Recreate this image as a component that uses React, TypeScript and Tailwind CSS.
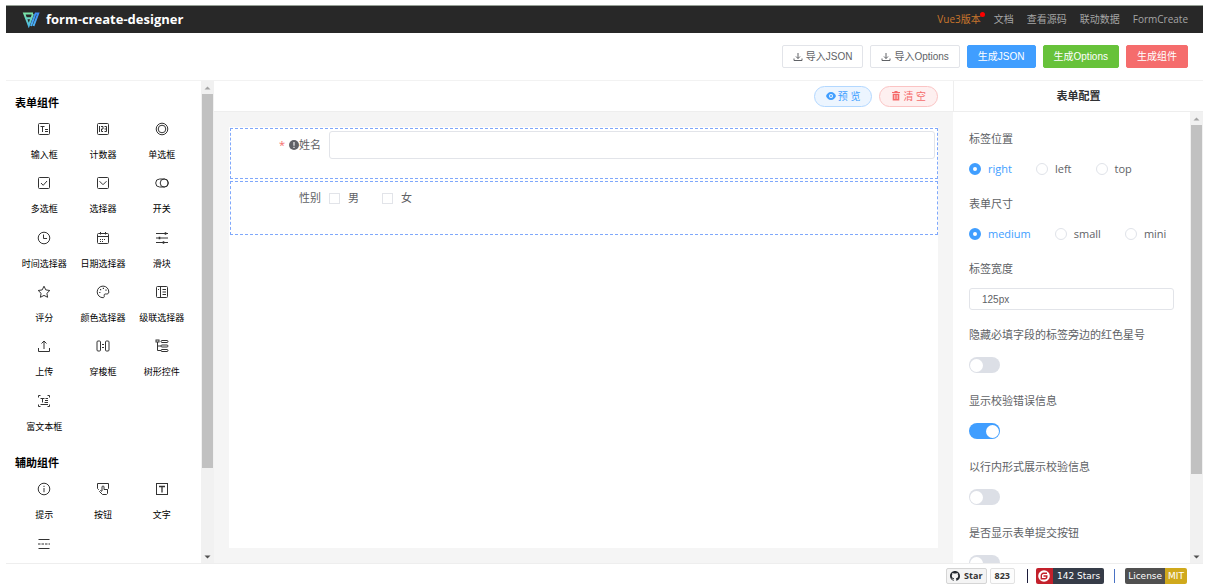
import type { ReactNode } from 'react';

const FONT = 'font-["Open_Sans","Noto_Sans_CJK_SC",sans-serif]';
const BUTTON_FONT = 'font-["Liberation_Sans","Noto_Sans_CJK_SC",sans-serif]';

type Item = { key: string; label?: string; icon: ReactNode };

const FORM_ITEMS: Item[] = [
    { key: 'input', label: '输入框', icon: <><rect x="1.5" y="1.5" width="11" height="11" rx="1" /><path d="M3.5 4.5h4M5.5 4.5v5.5M8 7.5h3M8 9.5h3" /></> },
    { key: 'number', label: '计数器', icon: <><rect x="1.5" y="1.5" width="11" height="11" rx="1" /><path d="M3.5 4v6M5 4.5h2v2.5H5.5v2.5H7M8.5 4.5h2v5h-2M8.5 7h2" /></> },
    { key: 'radio', label: '单选框', icon: <><circle cx="7" cy="7" r="5.8" /><circle cx="7" cy="7" r="3.8" /></> },
    { key: 'checkbox', label: '多选框', icon: <><rect x="1.5" y="1.5" width="11" height="11" rx="1" /><path d="M4 7l2.2 2.3L10 5" /></> },
    { key: 'select', label: '选择器', icon: <><rect x="1.5" y="1.5" width="11" height="11" rx="1" /><path d="M3.5 5.2L7 8.7l3.500-3.500" /></> },
    { key: 'switch', label: '开关', icon: <><rect x="0.7" y="3" width="12.6" height="8" rx="4" /><circle cx="9.2" cy="7" r="4" /></> },
    { key: 'time', label: '时间选择器', icon: <><circle cx="7" cy="7" r="5.8" /><path d="M6.5 3.5v4H10" /></> },
    { key: 'date', label: '日期选择器', icon: <><rect x="1.5" y="2.5" width="11" height="10" rx="1" /><path d="M1.5 5.5h11M4.5 1v2.5M9.5 1v2.5" /><path d="M4 8.5h6M4 10.5h4" strokeDasharray="1 1" /></> },
    { key: 'slider', label: '滑块', icon: <><path d="M1 2.5h12M1 7h12M1 11.5h12" /><path d="M10.5 1.2v2.6M4.5 5.7v2.6M8.5 10.2v2.6" strokeWidth="1.6" /></> },
    { key: 'rate', label: '评分', icon: <path d="M7 1.2l1.8 3.7 4 .6-2.9 2.8.7 4L7 10.4l-3.6 1.9.7-4L1.2 5.5l4-.6z" /> },
    { key: 'color', label: '颜色选择器', icon: <><path d="M7 12.7A5.8 5.8 0 1 1 12.8 7c0 1.6-1.2 2.2-2.6 2-1.6-.3-2.4.6-2 1.8.3 1-.2 1.9-1.2 1.9z" /><path d="M3.2 7.5h1.2M4 4.6h1.2M6.8 3.4H8M9.4 5.2h1.2" strokeWidth="1.2" /></> },
    { key: 'cascader', label: '级联选择器', icon: <><rect x="1.5" y="1.5" width="11" height="11" rx="1" /><path d="M5.5 1.5v11M7.5 4.5h3.5M7.5 7h3.5M7.5 9.5h3.5M3 4.5h1" /></> },
    { key: 'upload', label: '上传', icon: <path d="M1.5 9v3.5h11V9M7 10V2M4.5 4.5L7 2l2.5 2.5" /> },
    { key: 'transfer', label: '穿梭框', icon: <><rect x="1" y="2" width="3.5" height="10" rx="1" /><rect x="9.5" y="2" width="3.5" height="10" rx="1" /><path d="M6 5.5h2M6 8.5h2" /></> },
    { key: 'tree', label: '树形控件', icon: <><path d="M2.5 3v8.5H6M2.5 7H6" /><rect x="1" y="1" width="3" height="2" /><rect x="6" y="1.5" width="7" height="2" rx="1" /><rect x="6" y="6" width="7" height="2" rx="1" /><rect x="6" y="10.5" width="7" height="2" rx="1" /></> },
    { key: 'editor', label: '富文本框', icon: <path d="M1.5 3.5v-2h2M10.5 1.5h2v2M1.5 10.5v2h2M10.5 12.5h2v-2M3.5 4.5h4M5.5 4.5v4M8.5 4.5H11M8 6.5h3M7.5 8.5H11M3.5 10.5h7.5" /> },
];

const HELPER_ITEMS: Item[] = [
    { key: 'alert', label: '提示', icon: <><circle cx="7" cy="7" r="5.8" /><path d="M7 6v4.2M7 3.8V5" /></> },
    { key: 'button', label: '按钮', icon: <path d="M3 7.5h-.5l-1-1v-5h11v5l-1 1M6 9V5a1 1 0 0 1 2 0v2.500h3.500v4l-1 1H6.500L3.500 9.500l1-1L6 9.500" /> },
    { key: 'text', label: '文字', icon: <><rect x="1.5" y="1.5" width="11" height="11" /><path d="M4 4.5h6M7 4.5V10.5" strokeWidth="1.3" /></> },
    { key: 'divider', icon: <><path d="M1.5 2.5h11M1.5 11.5h11" /><path d="M1 7h12" strokeDasharray="2.5 1" /></> },
];

const SWITCHES = [
    { id: 'hideStar', label: '隐藏必填字段的标签旁边的红色星号', on: false },
    { id: 'showMessage', label: '显示校验错误信息', on: true },
    { id: 'inlineMessage', label: '以行内形式展示校验信息', on: false },
    { id: 'submitBtn', label: '是否显示表单提交按钮', on: false },
];

function Group({ title, items, size }: { title: string; items: Item[]; size: string }) {
    return (
        <section>
            <h2 className="pt-2.5 text-[11px] leading-6 font-bold text-black">{title}</h2>
            <ul className={`grid grid-cols-3 auto-rows-fr ${size}`}>
                {items.map((it) => (
                    <li key={it.key} className="flex flex-col items-center gap-3 pt-[7px]">
                        <svg className="size-3.5 shrink-0" viewBox="0 0 14 14" fill="none" stroke="#333" strokeWidth="1">
                            {it.icon}
                        </svg>
                        {it.label && <span className="text-[9px] leading-3.5 whitespace-nowrap text-black">{it.label}</span>}
                    </li>
                ))}
            </ul>
        </section>
    );
}

function Scrollbar() {
    return (
        <div className="flex w-[13px] shrink-0 flex-col items-center bg-[#f1f1f1]" aria-hidden="true">
            <svg className="size-[13px] shrink-0" viewBox="0 0 13 13"><path d="M3.5 8.5h6l-3-3z" fill="#a3a3a3" /></svg>
            <div className="min-h-0 w-full flex-1 px-px">
                <div className="h-[82%] bg-[#c1c1c1]" />
            </div>
            <svg className="size-[13px] shrink-0" viewBox="0 0 13 13"><path d="M3.5 5.5h6l-3 3z" fill="#505050" /></svg>
        </div>
    );
}

function RadioGroup({ legend, name, options }: { legend: string; name: string; options: string[] }) {
    return (
        <fieldset className="mb-[5px]">
            <legend className="leading-6">{legend}</legend>
            <div className="flex h-9 items-center gap-6">
                {options.map((o, i) => (
                    <label key={o} className="flex items-center gap-[7px] has-checked:text-[#409eff]">
                        <input
                            type="radio"
                            name={name}
                            defaultChecked={i === 0}
                            className="size-3 appearance-none rounded-full border border-[#e0e3e9] bg-white checked:border-4 checked:border-[#409eff]"
                        />
                        {o}
                    </label>
                ))}
            </div>
        </fieldset>
    );
}

function DownloadIcon() {
    return (
        <svg className="size-2.5" viewBox="0 0 10 10" fill="none" stroke="currentColor" strokeWidth="1">
            <path d="M1 6.5v2h8v-2M5 1v5.5M3 4.5l2 2 2-2" />
        </svg>
    );
}

export default function App() {
    const button = `h-[23px] rounded-[2px] border text-[10px] leading-none ${BUTTON_FONT}`;

    return (
        <div className={`flex h-screen flex-col bg-white pt-[5px] pr-2 pl-1.5 text-[#606266] ${FONT}`}>
            {/* Top bar */}
            <header className="flex h-7 shrink-0 items-center justify-between border-t border-[#96a096] bg-[#282828] pr-[15px] pl-4">
                <div className="flex items-center gap-1.5">
                    <svg className="h-4 w-[18px]" viewBox="0 0 18 16" fill="none" strokeWidth="2">
                        <defs>
                            <linearGradient id="mark" x1="0" y1="0" x2="0" y2="16" gradientUnits="userSpaceOnUse">
                                <stop offset="0" stopColor="#7fe8a0" />
                                <stop offset="1" stopColor="#45b4f0" />
                            </linearGradient>
                            <linearGradient id="slash" x1="0" y1="0" x2="0" y2="16" gradientUnits="userSpaceOnUse">
                                <stop offset="0" stopColor="#3a86f5" />
                                <stop offset="1" stopColor="#4fbcf5" />
                            </linearGradient>
                        </defs>
                        <path d="M11 1.5H2.200L6.800 13.500 11 2M4.200 6.200h5" stroke="url(#mark)" />
                        <path d="M13 1.500h3.200L11.500 14M13.500 1.500L9 14" stroke="url(#slash)" />
                    </svg>
                    <h1 className="text-[13px] leading-none font-bold text-white">form-create-designer</h1>
                </div>
                <nav className="flex items-center gap-[13px] text-[10px] text-[#a5a5a5]">
                    <a href="#vue3" className="relative text-[#c8762c]">
                        Vue3版本
                        <span className="absolute -right-1 top-0 size-[5px] rounded-full bg-[#ff0000]" />
                    </a>
                    <a href="#doc">文档</a>
                    <a href="#source">查看源码</a>
                    <a href="#linkage">联动数据</a>
                    <a href="#form-create">FormCreate</a>
                </nav>
            </header>

            {/* Actions */}
            <div className="flex h-12 shrink-0 items-center justify-end gap-[7px] border-b border-[#f2f2f2] pr-[15px]">
                <button className={`${button} flex items-center gap-[3px] border-[#e2e4e9] bg-white px-2.5`}><DownloadIcon />导入JSON</button>
                <button className={`${button} flex items-center gap-[3px] border-[#e2e4e9] bg-white px-2.5`}><DownloadIcon />导入Options</button>
                <button className={`${button} border-[#409eff] bg-[#409eff] px-2.5 text-white`}>生成JSON</button>
                <button className={`${button} border-[#67c23a] bg-[#67c23a] px-2.5 text-white`}>生成Options</button>
                <button className={`${button} border-[#f56c6c] bg-[#f56c6c] px-2.5 text-white`}>生成组件</button>
            </div>

            <div className="flex min-h-0 flex-1 border-b border-[#eee]">
                {/* Component palette */}
                <aside className="flex w-52 shrink-0">
                    <div className="flex-1 overflow-hidden pr-2.5 pl-[9px]">
                        <Group title="表单组件" items={FORM_ITEMS} size="h-[326px]" />
                        <Group title="辅助组件" items={HELPER_ITEMS} size="h-[109px]" />
                    </div>
                    <Scrollbar />
                </aside>

                {/* Canvas */}
                <main className="flex min-w-0 flex-1 flex-col">
                    <div className="flex h-[31px] shrink-0 items-center justify-end gap-[7px] border-b border-[#eee] pr-[15px]">
                        <button className="flex h-[21px] items-center gap-0.5 rounded-full border border-[#b3d8ff] bg-[#ecf5ff] px-[11px] text-[10px] text-[#409eff]">
                            <svg className="h-2 w-2.5" viewBox="0 0 10 8">
                                <path d="M5 0C2.5 0 .8 1.8 0 4c.8 2.2 2.5 4 5 4s4.200-1.800 5-4C9.200 1.800 7.500 0 5 0z" fill="currentColor" />
                                <circle cx="5" cy="4" r="2" fill="#ecf5ff" />
                                <circle cx="5" cy="4" r="1" fill="currentColor" />
                            </svg>
                            预 览
                        </button>
                        <button className="flex h-[21px] items-center gap-0.5 rounded-full border border-[#fbc4c4] bg-[#fef0f0] px-[11px] text-[10px] text-[#f56c6c]">
                            <svg className="size-2.5" viewBox="-1 0 10 10" fill="currentColor">
                                <path d="M2.500 0h3v1H8v1H0V1h2.500zM.7 2.700h6.600V9.500H.7z" />
                                <path d="M2.800 4v4M5.200 4v4" stroke="#fef0f0" strokeWidth=".8" />
                            </svg>
                            清 空
                        </button>
                    </div>
                    <div className="min-h-0 flex-1 bg-[#f5f5f5] p-[15px]">
                        <form className="flex h-full flex-col gap-0.5 bg-white pt-px pl-px text-[11px]">
                            <div className="flex h-[51px] items-start border border-dashed border-[#7fa8fb] px-0.5 pt-0.5">
                                <label htmlFor="name" className="flex h-7 w-24 shrink-0 items-center justify-end pr-2">
                                    <span className="mr-1 text-[#f56c6c]">*</span>
                                    <svg className="size-2.5" viewBox="0 0 10 10">
                                        <circle cx="5" cy="5" r="5" fill="#606266" />
                                        <path d="M5 2v3.700M5 6.800v1.200" stroke="#fff" strokeWidth="1.100" />
                                    </svg>
                                    姓名
                                </label>
                                <input id="name" type="text" className="h-7 min-w-0 flex-1 rounded-[3px] border border-[#e2e4e9] px-3 outline-none" />
                            </div>
                            <fieldset className="flex h-[54px] items-start border border-dashed border-[#7fa8fb] px-0.5 pt-0.5" aria-labelledby="gender">
                                <div className="flex h-7 items-center">
                                    <span id="gender" className="w-24 shrink-0 pr-2 text-right">性别</span>
                                    <label className="mr-[23px] flex items-center gap-2">
                                        <input type="checkbox" className="size-[11px] appearance-none border border-[#e2e4e9]" />
                                        男
                                    </label>
                                    <label className="flex items-center gap-2">
                                        <input type="checkbox" className="size-[11px] appearance-none border border-[#e2e4e9]" />
                                        女
                                    </label>
                                </div>
                            </fieldset>
                        </form>
                    </div>
                </main>

                {/* Form settings */}
                <aside className="flex w-[250px] shrink-0 flex-col text-[11px]">
                    <h2 className="h-[31px] shrink-0 border-b border-l border-[#eee] text-center leading-[30px] font-bold text-[#303133]">表单配置</h2>
                    <div className="flex min-h-0 flex-1">
                        <div className="flex-1 overflow-hidden px-4 pt-[15px]">
                            <RadioGroup legend="标签位置" name="labelPosition" options={['right', 'left', 'top']} />
                            <RadioGroup legend="表单尺寸" name="size" options={['medium', 'small', 'mini']} />
                            <div className="mb-1.5">
                                <label htmlFor="labelWidth" className="block leading-6">标签宽度</label>
                                <div className="flex h-9 items-center">
                                    <input
                                        id="labelWidth"
                                        type="text"
                                        defaultValue="125px"
                                        className={`h-[22px] w-full rounded-[3px] border border-[#e2e4e9] px-3 text-[10px] outline-none ${BUTTON_FONT}`}
                                    />
                                </div>
                            </div>
                            {SWITCHES.map((s) => (
                                <div key={s.id} className="mb-1.5">
                                    <label htmlFor={s.id} className="block leading-6 whitespace-nowrap">{s.label}</label>
                                    <div className="flex h-9 items-center">
                                        <input
                                            id={s.id}
                                            type="checkbox"
                                            role="switch"
                                            defaultChecked={s.on}
                                            className="flex h-4 w-[31px] appearance-none items-center rounded-full bg-[#dcdfe6] px-px before:size-[13px] before:rounded-full before:bg-white checked:justify-end checked:bg-[#409eff]"
                                        />
                                    </div>
                                </div>
                            ))}
                        </div>
                        <Scrollbar />
                    </div>
                </aside>
            </div>

            {/* Badges */}
            <footer className="flex h-6 shrink-0 items-center justify-end pr-4 text-[9px] leading-4">
                <a href="#github" className="flex gap-[3px] font-bold text-[#333]">
                    <span className="flex h-4 items-center gap-1 rounded-[2px] border border-[#d5d5d5] bg-[#f4f4f4] px-[3px]">
                        <svg className="size-2.5" viewBox="0 0 16 16" fill="#24292f">
                            <path d="M8 0C3.580 0 0 3.580 0 8c0 3.540 2.290 6.530 5.470 7.590.4.070.55-.17.55-.38 0-.19-.01-.82-.01-1.490-2.010.37-2.530-.49-2.690-.94-.09-.23-.48-.94-.82-1.130-.28-.15-.68-.52-.01-.53.63-.01 1.080.58 1.230.82.72 1.210 1.870.87 2.330.66.07-.52.28-.87.51-1.070-1.780-.2-3.640-.89-3.640-3.950 0-.87.31-1.590.82-2.150-.08-.2-.36-1.020.08-2.120 0 0 .67-.21 2.200.82.64-.18 1.320-.27 2-.27s1.360.09 2 .27c1.530-1.040 2.200-.82 2.200-.82.44 1.100.16 1.920.08 2.120.51.56.82 1.270.82 2.150 0 3.070-1.870 3.750-3.650 3.950.29.25.54.73.54 1.480 0 1.070-.01 1.930-.01 2.200 0 .21.15.46.55.38A8.010 8.010 0 0 0 16 8c0-4.420-3.580-8-8-8z" />
                        </svg>
                        Star
                    </span>
                    <span className="flex h-4 items-center rounded-[2px] border border-[#e2e2e2] bg-[#fcfcfc] px-1">823</span>
                </a>
                <span className="mr-2 ml-3 h-3.5 w-px bg-[#1c1c3a]" />
                <a href="#gitee" className='flex h-4 overflow-hidden rounded-[2px] font-["DejaVu_Sans",sans-serif] text-white'>
                    <span className="flex w-[17px] items-center justify-center bg-[#c3202b]">
                        <svg className="size-3" viewBox="0 0 12 12">
                            <circle cx="6" cy="6" r="5.800" fill="#fff" />
                            <path d="M9 3.300H5.500A2.200 2.200 0 0 0 3.300 5.500v3.200h3.500A2 2 0 0 0 8.800 6.700V6H5.500" fill="none" stroke="#c3202b" strokeWidth="1.400" />
                        </svg>
                    </span>
                    <span className="bg-[#363c48] px-1">142 Stars</span>
                </a>
                <span className="mx-2.5 h-3.5 w-px bg-[#4a72c4]" />
                <a href="#license" className='flex h-4 overflow-hidden rounded-[2px] font-["DejaVu_Sans",sans-serif] text-white'>
                    <span className="bg-[#505050] px-[3px]">License</span>
                    <span className="bg-[#d0a91c] px-[3px]">MIT</span>
                </a>
            </footer>
        </div>
    );
}
